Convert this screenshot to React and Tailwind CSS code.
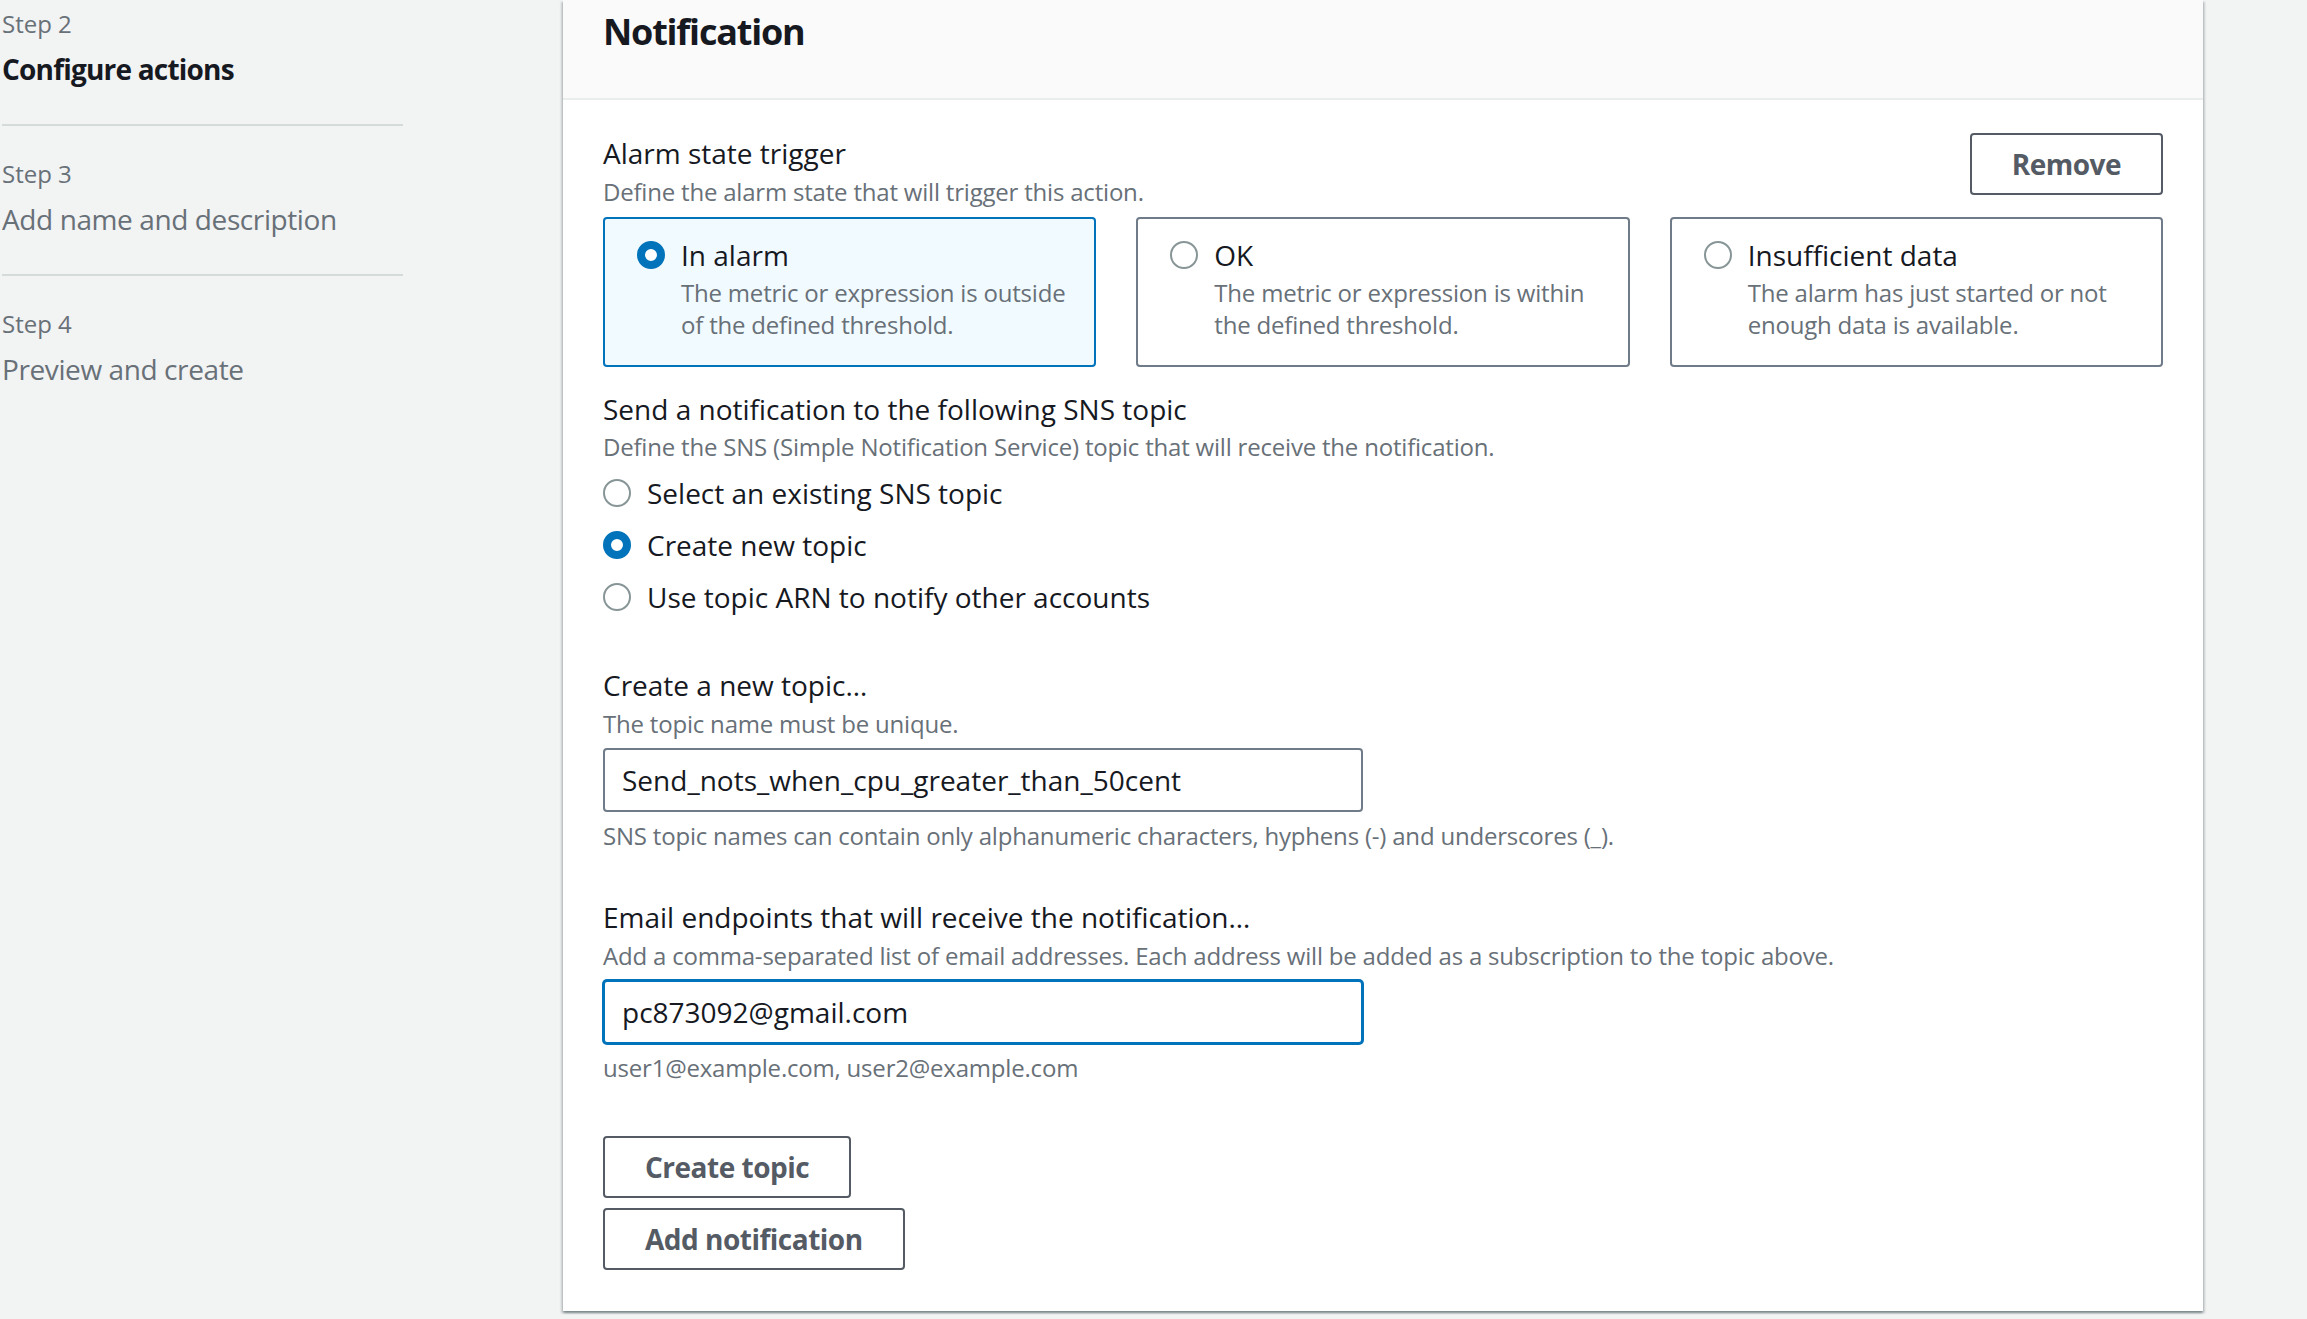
import React from 'react';

const steps = [
  { label: 'Step 2', title: 'Configure actions', active: true },
  { label: 'Step 3', title: 'Add name and description' },
  { label: 'Step 4', title: 'Preview and create', last: true },
];

const tiles = [
  { title: 'In alarm', lines: ['The metric or expression is outside', 'of the defined threshold.'], checked: true },
  { title: 'OK', lines: ['The metric or expression is within', 'the defined threshold.'] },
  { title: 'Insufficient data', lines: ['The alarm has just started or not', 'enough data is available.'] },
];

const topicOptions = [
  { label: 'Select an existing SNS topic' },
  { label: 'Create new topic', checked: true },
  { label: 'Use topic ARN to notify other accounts' },
];

const Radio = ({ checked }) =>
  checked ? (
    <span className="block w-[28px] h-[28px] shrink-0 rounded-full border-[8px] border-[#0073bb] bg-white" />
  ) : (
    <span className="block w-[28px] h-[28px] shrink-0 rounded-full border-2 border-[#879596] bg-white" />
  );

const Tile = ({ title, lines, checked }) => (
  <div
    className={
      checked
        ? 'rounded-[4px] border-2 border-[#0073bb] bg-[#f1faff] pl-[32px] pr-[16px] pt-[14px] pb-[24px]'
        : 'rounded-[4px] border-2 border-[#6f7b88] bg-white pl-[32px] pr-[16px] pt-[14px] pb-[24px]'
    }
  >
    <div className="flex items-center gap-[16px] h-[44px]">
      <Radio checked={checked} />
      <span className="text-[28px] leading-[44px] text-[#16191f]">{title}</span>
    </div>
    <div className="pl-[44px] text-[24px] leading-[32px] text-[#687078] tracking-[-0.2px]">
      {lines.map((l) => (
        <div key={l} className="whitespace-nowrap">{l}</div>
      ))}
    </div>
  </div>
);

const Label = ({ children }) => (
  <div className="text-[28px] leading-[44px] text-[#16191f]">{children}</div>
);

const Desc = ({ children, className = '' }) => (
  <div className={`text-[24px] leading-[32px] text-[#687078] tracking-[-0.2px] ${className}`}>{children}</div>
);

const Button = ({ children, className = '' }) => (
  <button
    className={`h-[62px] px-[40px] rounded-[4px] border-2 border-[#545b64] bg-white text-[28px] font-bold tracking-[-0.5px] text-[#545b64] ${className}`}
  >
    {children}
  </button>
);

export default function App() {
  return (
    <div className="flex min-h-[1319px] bg-[#f2f3f3] font-['Open_Sans',sans-serif]">
      {/* wizard steps */}
      <div className="w-[563px] shrink-0 pl-[2px] pt-[8px]">
        <div className="w-[401px]">
          {steps.map((s) => (
            <div
              key={s.label}
              className={s.last ? 'pb-[33px]' : 'pb-[33px] mb-[32px] border-b-2 border-[#d5dbdb]'}
            >
              <div className="text-[24px] leading-[32px] text-[#687078]">{s.label}</div>
              <div
                className={
                  s.active
                    ? 'mt-[7px] text-[28px] leading-[44px] font-bold tracking-[-0.8px] text-[#16191f]'
                    : 'mt-[7px] text-[28px] leading-[44px] tracking-[-0.4px] text-[#687078]'
                }
              >
                {s.title}
              </div>
            </div>
          ))}
        </div>
      </div>

      {/* notification panel */}
      <div className="w-[1640px] shrink-0 self-start bg-white shadow-[0_2px_2px_0_rgba(0,28,36,0.3),2px_2px_2px_0_rgba(0,28,36,0.15),-2px_2px_2px_0_rgba(0,28,36,0.15)]">
        <div className="h-[100px] bg-[#fafafa] border-b-2 border-[#eaeded] px-[40px] pt-[10px]">
          <h2 className="text-[36px] leading-[44px] font-bold tracking-[-1.2px] text-[#16191f]">Notification</h2>
        </div>

        <div className="px-[40px] pt-[31px] pb-[41px]">
          <div className="flex justify-between items-start">
            <div>
              <Label>Alarm state trigger</Label>
              <Desc className="mt-[1px]">Define the alarm state that will trigger this action.</Desc>
            </div>
            <Button className="mt-[2px]">Remove</Button>
          </div>

          <div className="grid grid-cols-3 gap-[40px] mt-[9px]">
            {tiles.map((t) => (
              <Tile key={t.title} {...t} />
            ))}
          </div>

          <div className="mt-[20px]">
            <Label>Send a notification to the following SNS topic</Label>
            <Desc>Define the SNS (Simple Notification Service) topic that will receive the notification.</Desc>
            <div className="mt-[8px] flex flex-col gap-[8px]">
              {topicOptions.map((o) => (
                <div key={o.label} className="flex items-center gap-[16px] h-[44px]">
                  <Radio checked={o.checked} />
                  <span className="text-[28px] leading-[44px] text-[#16191f]">{o.label}</span>
                </div>
              ))}
            </div>
          </div>

          <div className="mt-[44px]">
            <Label>Create a new topic…</Label>
            <Desc className="mt-[1px]">The topic name must be unique.</Desc>
            <input
              readOnly
              value="Send_nots_when_cpu_greater_than_50cent"
              className="mt-[8px] block w-[760px] h-[64px] rounded-[4px] border-2 border-[#6f7b88] bg-white pl-[17px] text-[28px] text-[#16191f] outline-none"
            />
            <Desc className="mt-[8px]">
              SNS topic names can contain only alphanumeric characters, hyphens (-) and underscores (_).
            </Desc>
          </div>

          <div className="mt-[43px]">
            <Label>Email endpoints that will receive the notification…</Label>
            <Desc className="mt-[1px]">
              Add a comma-separated list of email addresses. Each address will be added as a subscription to the topic above.
            </Desc>
            <input
              readOnly
              value="pc873092@gmail.com"
              className="mt-[8px] block w-[760px] h-[64px] rounded-[4px] border-2 border-[#0073bb] shadow-[0_0_0_1px_#0073bb] bg-white pl-[17px] text-[28px] text-[#16191f] outline-none"
            />
            <Desc className="mt-[8px]">user1@example.com, user2@example.com</Desc>
          </div>

          <div className="mt-[52px] flex flex-col items-start gap-[10px]">
            <Button>Create topic</Button>
            <Button>Add notification</Button>
          </div>
        </div>
      </div>
    </div>
  );
}
